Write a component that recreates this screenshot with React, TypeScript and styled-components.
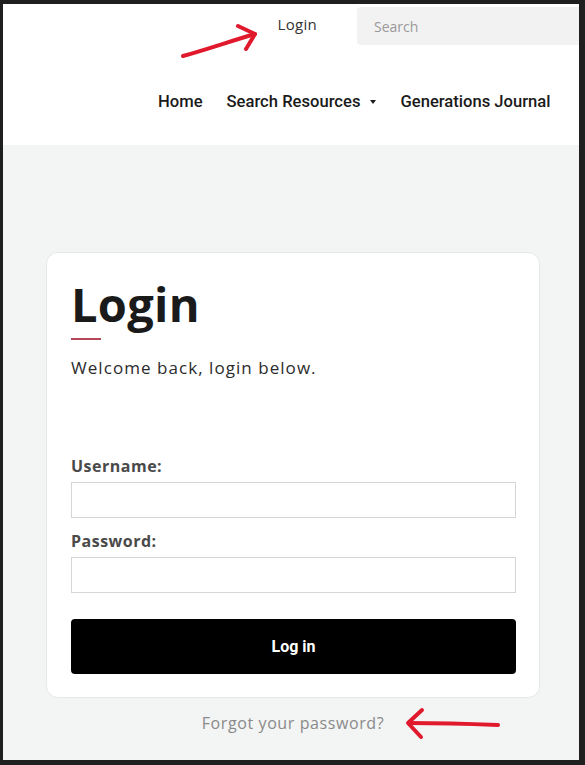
import * as React from 'react';
import styled, { createGlobalStyle } from 'styled-components';

const GlobalStyle = createGlobalStyle`
  html, body {
    margin: 0;
    padding: 0;
    background: #1f1f1f;
  }
  * {
    box-sizing: border-box;
  }
`;

const Frame = styled.div`
  width: 585px;
  height: 765px;
  padding: 4px 6px 5px 3px;
  background: #1f1f1f;
`;

const Page = styled.div`
  position: relative;
  width: 100%;
  height: 100%;
  display: flex;
  flex-direction: column;
  overflow: hidden;
  background: #f3f4f4;
`;

const Header = styled.header`
  height: 141px;
  background: #ffffff;
  display: flex;
  flex-direction: column;
`;

const TopBar = styled.div`
  display: flex;
  justify-content: flex-end;
  align-items: center;
  gap: 40px;
  padding-top: 3px;
`;

const TopLink = styled.a`
  font-family: 'Open Sans', sans-serif;
  font-size: 15px;
  letter-spacing: 0.3px;
  color: #333;
  text-decoration: none;
  margin-top: -5px;
`;

const SearchBox = styled.div`
  width: 222px;
  height: 38px;
  background: #f2f2f2;
  border-radius: 4px 0 0 4px;
  display: flex;
  align-items: center;
  padding-left: 17px;
  font-family: 'Open Sans', sans-serif;
  font-size: 14px;
  color: #999;
`;

const Nav = styled.nav`
  display: flex;
  align-items: center;
  gap: 24px;
  padding-left: 155px;
  margin-top: 47px;
  white-space: nowrap;
`;

const NavItem = styled.a`
  font-family: 'Roboto', sans-serif;
  font-weight: 500;
  font-size: 16.6px;
  color: #1a1a1a;
  text-decoration: none;
  display: flex;
  align-items: center;
  gap: 9px;
`;

const Caret = styled.span`
  width: 0;
  height: 0;
  border-left: 3.5px solid transparent;
  border-right: 3.5px solid transparent;
  border-top: 4px solid #1a1a1a;
  margin-left: 1px;
`;

const Main = styled.main`
  flex: 1;
  display: flex;
  flex-direction: column;
  align-items: flex-start;
  padding: 107px 0 0 43px;
`;

const Card = styled.section`
  width: 494px;
  background: #ffffff;
  border: 1px solid #e6e8e8;
  border-radius: 12px;
  padding: 22px 24px 23px 24px;
  display: flex;
  flex-direction: column;
`;

const Title = styled.h1`
  margin: 0;
  font-family: 'Open Sans', sans-serif;
  font-weight: 700;
  font-size: 47px;
  line-height: 58px;
  color: #1a1a1a;
  letter-spacing: 0.3px;
`;

const Accent = styled.div`
  width: 30px;
  height: 2px;
  background: #b5475a;
  margin-top: 5px;
`;

const Lead = styled.p`
  margin: 16px 0 0 0;
  font-family: 'Open Sans', sans-serif;
  font-size: 17px;
  letter-spacing: 1.05px;
  color: #2b2b2b;
`;

const Form = styled.form`
  display: flex;
  flex-direction: column;
  margin-top: 77px;
`;

const Label = styled.label`
  font-family: 'Open Sans', sans-serif;
  font-weight: 700;
  font-size: 16px;
  line-height: 20px;
  letter-spacing: 0.5px;
  color: #4a4a4a;
  margin-bottom: 6px;
`;

const Input = styled.input`
  width: 445px;
  height: 36px;
  border: 1px solid #d6d6d6;
  background: #fff;
  margin-bottom: 13px;
  font-size: 14px;
  padding: 0 8px;
  outline: none;
`;

const Submit = styled.button`
  width: 445px;
  height: 55px;
  margin-top: 13px;
  border: none;
  border-radius: 4px;
  background: #000;
  color: #fff;
  font-family: 'Roboto', sans-serif;
  font-weight: 700;
  font-size: 16px;
  cursor: pointer;
`;

const Forgot = styled.a`
  width: 494px;
  text-align: center;
  margin-top: 14px;
  font-family: 'Open Sans', sans-serif;
  font-size: 16px;
  letter-spacing: 0.6px;
  color: #8a8a8a;
  text-decoration: none;
`;

const Annotation = styled.svg`
  position: absolute;
  left: 0;
  top: 0;
  pointer-events: none;
`;

const App: React.FunctionComponent = () => {
  return (
    <>
      <GlobalStyle />
      <Frame>
        <Page>
          <Header>
            <TopBar>
              <TopLink href="#">Login</TopLink>
              <SearchBox>Search</SearchBox>
            </TopBar>
            <Nav>
              <NavItem href="#">Home</NavItem>
              <NavItem href="#">
                Search Resources <Caret />
              </NavItem>
              <NavItem href="#">Generations Journal</NavItem>
            </Nav>
          </Header>
          <Main>
            <Card>
              <Title>Login</Title>
              <Accent />
              <Lead>Welcome back, login below.</Lead>
              <Form onSubmit={ (e) => e.preventDefault() }>
                <Label htmlFor="username">Username:</Label>
                <Input id="username" type="text" />
                <Label htmlFor="password">Password:</Label>
                <Input id="password" type="password" />
                <Submit type="submit">Log in</Submit>
              </Form>
            </Card>
            <Forgot href="#">Forgot your password?</Forgot>
          </Main>
          <Annotation width="576" height="756" viewBox="0 0 576 756">
            <g fill="none" stroke="#e0192d" strokeWidth="4" strokeLinecap="round" strokeLinejoin="round">
              <path d="M180 52 C 205 45, 228 37, 252 30" />
              <path d="M235 22 L 252 30 L 243 45" />
              <path d="M406 719 C 440 719, 470 720, 495 721" />
              <path d="M419 706 L 405 719 L 418 733" />
            </g>
          </Annotation>
        </Page>
      </Frame>
    </>
  );
};

export default App;
